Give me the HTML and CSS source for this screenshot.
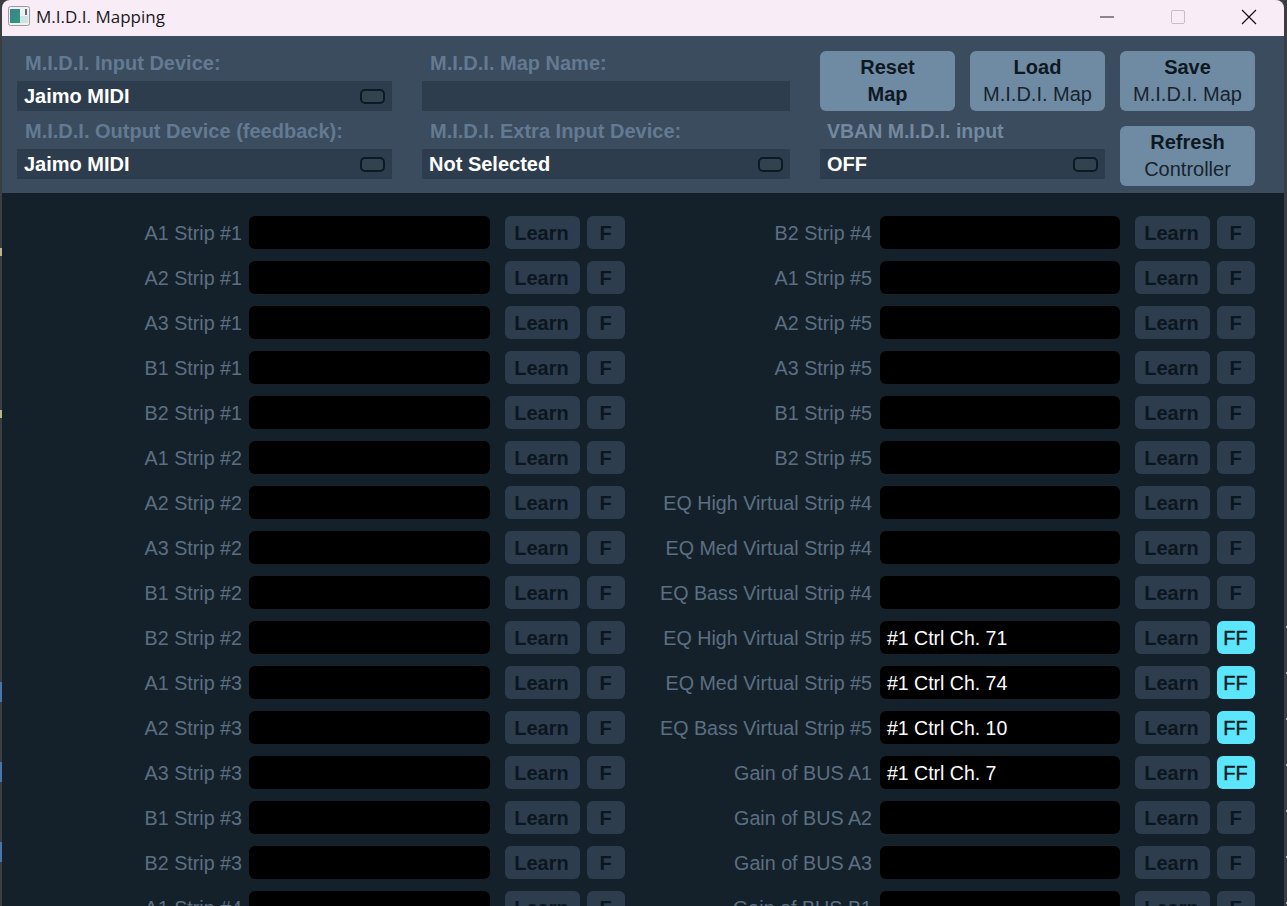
FILE: index.html
```html
<!DOCTYPE html>
<html lang="en">
<head>
<meta charset="utf-8">
<title>M.I.D.I. Mapping</title>
<link rel="stylesheet" href="styles.css">
</head>
<body>
<div class="window">
  <div class="titlebar">
    <svg class="app-icon" viewBox="0 0 22 20" width="22" height="20"><defs><linearGradient id="ic" x1="0" y1="0" x2="1" y2="1"><stop offset="0" stop-color="#3f7f8e"/><stop offset="1" stop-color="#2f9a78"/></linearGradient></defs><rect x="0.5" y="0.5" width="21" height="19" rx="2" fill="#eef0f2" stroke="#9a9a9e"/><rect x="2" y="3" width="10" height="14" fill="url(#ic)"/><rect x="12" y="10" width="8" height="7" fill="#cfe3e6"/><rect x="17" y="3" width="2" height="6" fill="#667"/></svg>
    <span class="title">M.I.D.I. Mapping</span>
    <div class="win-controls">
      <svg class="win-btn" viewBox="0 0 16 16" width="16" height="16"><path d="M1 8h14" stroke="#222" stroke-width="1" fill="none"/></svg>
      <svg class="win-btn" viewBox="0 0 16 16" width="16" height="16"><rect x="1.5" y="1.5" width="13" height="13" rx="1.5" fill="none" stroke="#c4c0c6"/></svg>
      <svg class="win-btn" viewBox="0 0 16 16" width="16" height="16"><path d="M1 1l14 14M15 1L1 15" stroke="#111" stroke-width="1.2" fill="none"/></svg>
    </div>
  </div>
  <div class="header">
    <div class="hrow hrow-top">
      <div class="group g1"><div class="glabel">M.I.D.I. Input Device:</div><div class="select"><span>Jaimo MIDI</span><i class="pill"></i></div></div>
      <div class="group g2"><div class="glabel">M.I.D.I. Map Name:</div><div class="select"></div></div>
      <div class="btn strong"><b>Reset</b><b>Map</b></div>
      <div class="btn"><b>Load</b><span>M.I.D.I. Map</span></div>
      <div class="btn"><b>Save</b><span>M.I.D.I. Map</span></div>
    </div>
    <div class="hrow hrow-bottom">
      <div class="group g1"><div class="glabel">M.I.D.I. Output Device (feedback):</div><div class="select"><span>Jaimo MIDI</span><i class="pill"></i></div></div>
      <div class="group g2"><div class="glabel">M.I.D.I. Extra Input Device:</div><div class="select"><span>Not Selected</span><i class="pill"></i></div></div>
      <div class="group g3"><div class="glabel vban">VBAN M.I.D.I. input</div><div class="select"><span>OFF</span><i class="pill"></i></div></div>
      <div class="btn refresh"><b>Refresh</b><span>Controller</span></div>
    </div>
  </div>
  <div class="map" id="map"></div>
</div>
<script src="app.js"></script>
</body>
</html>
```
FILE: styles.css
```css
* { box-sizing: border-box; }
html, body { margin: 0; height: 100%; overflow: hidden; }
body {
  font-family: "Liberation Sans", Arial, sans-serif;
  background-color: #3a3e42;
  background-image:
    linear-gradient(#4a74a8, #4a74a8), linear-gradient(#4a74a8, #4a74a8), linear-gradient(#4a74a8, #4a74a8),
    linear-gradient(#b9b48e, #b9b48e), linear-gradient(#b9b48e, #b9b48e),
    repeating-linear-gradient(to bottom, #a9adb2 0 2px, #3a3e42 2px 46px);
  background-size: 2px 20px, 2px 20px, 2px 20px, 2px 8px, 2px 8px, 1px 280px;
  background-position: 0 682px, 0 762px, 0 842px, 0 248px, 0 410px, 1286px 626px;
  background-repeat: no-repeat;
}
.window { margin-left: 2px; width: 1282px; height: 906px; display: flex; flex-direction: column; overflow: hidden; border-radius: 8px 8px 0 0; }
.titlebar { height: 36px; flex: none; background: #f8edf7; display: flex; align-items: center; padding-left: 6px; }
.app-icon { flex: none; margin-top: -5px; }
.title { margin-left: 6px; font: 17px "Open Sans", "Noto Sans", sans-serif; color: #1a1a1a; margin-top: -4px; }
.win-controls { margin-left: auto; display: flex; gap: 55px; padding-right: 27px; margin-top: -3px; }
.win-btn { display: block; }
.header { flex: none; height: 157px; background: #3a4c5e; padding: 15px 0 0 15px; }
.hrow { display: flex; }
.hrow-top { height: 60px; align-items: flex-end; }
.hrow-bottom { margin-top: 10px; align-items: flex-start; }
.group { height: 58px; flex: none; }
.g1 { width: 375px; margin-right: 30px; }
.g2 { width: 368px; margin-right: 30px; }
.g3 { width: 285px; margin-right: 15px; }
.glabel { height: 20px; line-height: 20px; margin: 0 0 8px 8px; font-size: 20px; font-weight: bold; color: #637a92; white-space: nowrap; }
.glabel.vban { margin-left: 7px; font-size: 19.5px; color: #7488a0; }
.select { height: 30px; background: #2d3d4d; display: flex; align-items: center; justify-content: space-between; padding: 0 7px 0 7px; font-size: 20px; font-weight: bold; color: #fff; }
.pill { width: 25px; height: 15px; border: 2px solid #0d1a24; border-radius: 5px; background: #32424f; }
.btn { flex: none; width: 135px; height: 60px; padding-bottom: 1px; margin-right: 15px; background: #6f8ba3; border-radius: 6px; display: flex; flex-direction: column; align-items: center; justify-content: center; font-size: 20px; line-height: 27px; color: #0e1822; }
.btn span { color: #17232e; }
.refresh { margin-top: 5px; }
.map { flex: 1; min-height: 0; background: #15212a; padding-top: 23px; display: grid; grid-template-columns: 623px 1fr; grid-template-rows: repeat(16, 33px); row-gap: 12px; grid-auto-flow: column; overflow: hidden; }
.row { display: flex; align-items: center; }
.lbl { width: 240px; flex: none; padding-top: 2px; text-align: right; font-size: 19.7px; color: #5c6f82; white-space: nowrap; }
.field { height: 33px; flex: none; width: 241px; margin-left: 7px; padding: 1px 0 0 7px; background: #000; border-radius: 6px; color: #fff; font-size: 19.5px; line-height: 33px; }
.rcol .lbl { width: 247px; }
.rcol .field { width: 240px; margin-left: 8px; }
.learn, .f { height: 33px; flex: none; padding-top: 1px; background: #2d3d4d; border-radius: 6px; color: #0c1620; font-size: 20px; text-align: center; line-height: 33px; }
.learn { width: 75px; margin-left: 15px; padding-right: 2px; font-weight: bold; }
.f { width: 38px; margin-left: 7px; padding-right: 1px; font-weight: bold; }
.f.on { background: #5ce6fb; color: #0c1a22; font-weight: normal; -webkit-text-stroke: 0.4px #0c1a22; }
```
FILE: app.js
```js
var left = [];
[1, 2, 3].forEach(function (n) {
  ['A1', 'A2', 'A3', 'B1', 'B2'].forEach(function (b) { left.push([b + ' Strip #' + n]); });
});
left.push(['A1 Strip #4']);
var right = [];
['B2 Strip #4', 'A1 Strip #5', 'A2 Strip #5', 'A3 Strip #5', 'B1 Strip #5', 'B2 Strip #5',
 'EQ High Virtual Strip #4', 'EQ Med Virtual Strip #4', 'EQ Bass Virtual Strip #4'].forEach(function (t) { right.push([t]); });
right.push(['EQ High Virtual Strip #5', '#1 Ctrl Ch. 71'], ['EQ Med Virtual Strip #5', '#1 Ctrl Ch. 74'],
  ['EQ Bass Virtual Strip #5', '#1 Ctrl Ch. 10'], ['Gain of BUS A1', '#1 Ctrl Ch. 7'],
  ['Gain of BUS A2'], ['Gain of BUS A3'], ['Gain of BUS B1']);
var map = document.getElementById('map');
function add(items, cls) {
  items.forEach(function (r) {
    var row = document.createElement('div');
    row.className = 'row ' + cls;
    var on = !!r[1];
    row.innerHTML = '<div class="lbl">' + r[0] + '</div><div class="field">' + (r[1] || '') +
      '</div><div class="learn">Learn</div><div class="f' + (on ? ' on' : '') + '">' + (on ? 'FF' : 'F') + '</div>';
    map.appendChild(row);
  });
}
add(left, 'lcol');
add(right, 'rcol');
```
